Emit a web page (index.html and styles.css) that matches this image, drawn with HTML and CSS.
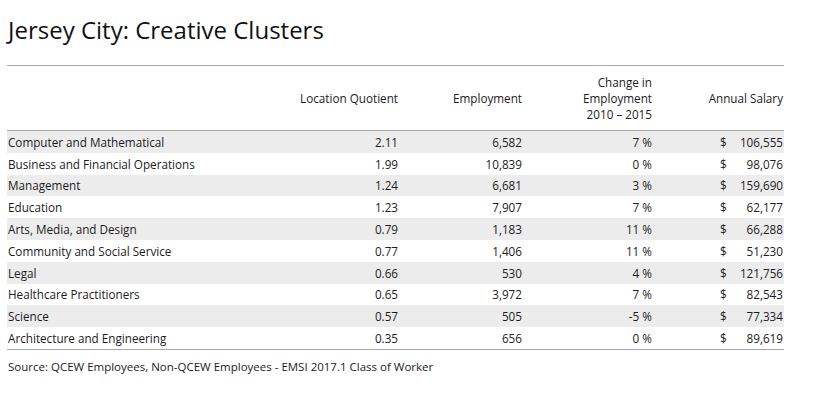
FILE: index.html
```html
<!DOCTYPE html>
<html>
<head>
<meta charset="utf-8">
<link rel="stylesheet" href="styles.css">
</head>
<body>
<div class="page">
  <h1 class="title">Jersey City: Creative Clusters</h1>
  <table class="clusters">
    <colgroup>
      <col class="c-name"><col class="c-lq"><col class="c-emp"><col class="c-chg"><col class="c-sal">
    </colgroup>
    <thead>
      <tr>
        <th></th>
        <th class="num">Location Quotient</th>
        <th class="num">Employment</th>
        <th class="num">Change in<br>Employment<br>2010 – 2015</th>
        <th class="num">Annual Salary</th>
      </tr>
    </thead>
    <tbody>
      <tr class="shade"><td>Computer and Mathematical</td><td class="num">2.11</td><td class="num">6,582</td><td class="num">7 %</td><td><span class="sal"><span>$</span><span>106,555</span></span></td></tr>
      <tr><td>Business and Financial Operations</td><td class="num">1.99</td><td class="num">10,839</td><td class="num">0 %</td><td><span class="sal"><span>$</span><span>98,076</span></span></td></tr>
      <tr class="shade"><td>Management</td><td class="num">1.24</td><td class="num">6,681</td><td class="num">3 %</td><td><span class="sal"><span>$</span><span>159,690</span></span></td></tr>
      <tr><td>Education</td><td class="num">1.23</td><td class="num">7,907</td><td class="num">7 %</td><td><span class="sal"><span>$</span><span>62,177</span></span></td></tr>
      <tr class="shade"><td>Arts, Media, and Design</td><td class="num">0.79</td><td class="num">1,183</td><td class="num">11 %</td><td><span class="sal"><span>$</span><span>66,288</span></span></td></tr>
      <tr><td>Community and Social Service</td><td class="num">0.77</td><td class="num">1,406</td><td class="num">11 %</td><td><span class="sal"><span>$</span><span>51,230</span></span></td></tr>
      <tr class="shade"><td>Legal</td><td class="num">0.66</td><td class="num">530</td><td class="num">4 %</td><td><span class="sal"><span>$</span><span>121,756</span></span></td></tr>
      <tr><td>Healthcare Practitioners</td><td class="num">0.65</td><td class="num">3,972</td><td class="num">7 %</td><td><span class="sal"><span>$</span><span>82,543</span></span></td></tr>
      <tr class="shade"><td>Science</td><td class="num">0.57</td><td class="num">505</td><td class="num">-5 %</td><td><span class="sal"><span>$</span><span>77,334</span></span></td></tr>
      <tr><td>Architecture and Engineering</td><td class="num">0.35</td><td class="num">656</td><td class="num">0 %</td><td><span class="sal"><span>$</span><span>89,619</span></span></td></tr>
    </tbody>
  </table>
  <p class="source">Source: QCEW Employees, Non-QCEW Employees - EMSI 2017.1 Class of Worker</p>
</div>
</body>
</html>
```
FILE: styles.css
```css
html, body {
  margin: 0;
  padding: 0;
  background: #ffffff;
}
body {
  font-family: "Open Sans", "Lato", sans-serif;
  color: #1c1c1c;
}
.page {
  padding: 0 0 0 7px;
  width: 777px;
}
.title {
  margin: 0;
  padding-top: 14px;
  height: 65px;
  box-sizing: border-box;
  font-size: 24px;
  font-weight: 400;
  line-height: 32px;
  padding-left: 1px;
  color: #111;
}
.clusters {
  width: 777px;
  border-collapse: collapse;
  border-top: 1px solid #a8a8a8;
  border-bottom: 1px solid #a8a8a8;
  font-size: 11.7px;
  table-layout: fixed;
}
.c-name { width: 293px; }
.c-lq { width: 99px; }
.c-emp { width: 124px; }
.c-chg { width: 130px; }
.c-sal { width: 131px; }
thead tr {
  height: 65px;
  border-bottom: 1px solid #a8a8a8;
}
th {
  font-weight: 400;
  line-height: 16px;
  vertical-align: middle;
  padding: 0;
}
td {
  padding: 0;
  height: 21.8px;
  line-height: 16px;
  vertical-align: middle;
  white-space: nowrap;
}
td:first-child {
  padding-left: 1px;
}
.num {
  text-align: right;
  padding-right: 1px;
}
.shade {
  background: #ececec;
}
.sal {
  display: flex;
  justify-content: space-between;
  margin-left: 67px;
  padding-right: 1px;
}
.source {
  margin: 9px 0 0 1px;
  font-size: 11.5px;
  line-height: 16px;
}
```
